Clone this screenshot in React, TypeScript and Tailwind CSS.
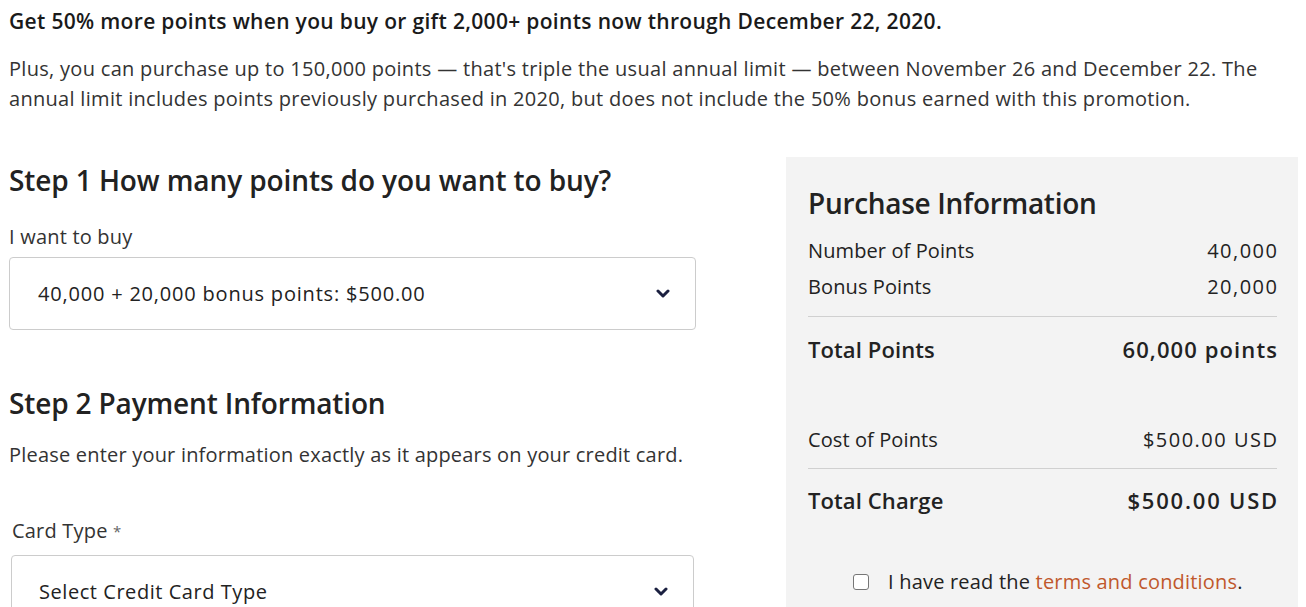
const font = { fontFamily: '"Open Sans", "Liberation Sans", sans-serif' };

const Chevron = () => (
  <svg width="14" height="9" viewBox="0 0 14 9" className="text-[#1b2040]">
    <path d="M2 2l5 5 5-5" fill="none" stroke="currentColor" strokeWidth="3" strokeLinecap="round" strokeLinejoin="round" />
  </svg>
);

const SelectBox = ({ value, className, track }: { value: string; className: string; track: string }) => (
  <div
    className={`flex items-center justify-between rounded border border-[#cccccc] bg-white pr-[25px] ${className}`}
  >
    <span className={`text-[20px] text-[#222] ${track}`}>{value}</span>
    <Chevron />
  </div>
);

const Row = ({
  label,
  value,
  bold,
  track = "tracking-[1.5px] -mr-[1.5px]",
}: {
  label: string;
  value: string;
  bold?: boolean;
  track?: string;
}) => (
  <div
    className={`flex items-center justify-between ${bold ? "font-semibold text-[22px]" : "text-[20px]"} text-[#222]`}
  >
    <span className="tracking-[0.1px]">{label}</span>
    <span className={track}>{value}</span>
  </div>
);

export default function App() {
  return (
    <div className="w-[1306px] h-[607px] overflow-hidden bg-white text-[#222]" style={font}>
      <div className="pl-[9px] pr-[8px]">
        <h1 className="pt-[8px] text-[21px] font-semibold leading-[26px] tracking-[0.32px] text-[#1a1a1a]">
          Get 50% more points when you buy or gift 2,000+ points now through December 22, 2020.
        </h1>
        <p className="mt-[20px] text-[20px] leading-[30px] text-[#333] tracking-[0.3px]">
          Plus, you can purchase up to 150,000 points — that's triple the usual annual limit — between November 26 and December 22. The
          annual limit includes points previously purchased in 2020, but does not include the 50% bonus earned with this promotion.
        </p>

        <div className="mt-[40px] flex items-start justify-between">
          <div className="w-[687px]">
            <h2 className="mt-[10px] text-[28px] font-semibold leading-[32px] tracking-[-0.1px]">
              Step 1 How many points do you want to buy?
            </h2>
            <div className="mt-[29px] text-[20px] leading-[24px] tracking-[0.2px] text-[#333]">I want to buy</div>
            <SelectBox
              value="40,000 + 20,000 bonus points: $500.00"
              track="tracking-[0.8px]"
              className="mt-[8px] h-[73px] pl-[28px]"
            />

            <h2 className="mt-[57px] text-[28px] font-semibold leading-[32px] tracking-[-0.15px]">Step 2 Payment Information</h2>
            <div className="mt-[24px] text-[20px] leading-[24px] tracking-[0.2px] text-[#333]">
              Please enter your information exactly as it appears on your credit card.
            </div>
            <div className="mt-[52px] pl-[3px] text-[20px] leading-[24px] tracking-[0.2px] text-[#333]">
              Card Type <span className="text-[#666] text-[15px] align-top">*</span>
            </div>
            <SelectBox
              value="Select Credit Card Type"
              track="tracking-[0.55px]"
              className="mt-[12px] ml-[2px] w-[683px] h-[73px] pl-[27px]"
            />
          </div>

          <div className="mt-[3px] w-[512px] h-[460px] bg-[#f3f3f3] px-[22px] pr-[21px]">
            <h2 className="pt-[28px] text-[28px] font-semibold leading-[36px] tracking-[-0.3px]">Purchase Information</h2>
            <div className="mt-[18px] flex flex-col gap-[12px] leading-[24px]">
              <Row label="Number of Points" value="40,000" />
              <Row label="Bonus Points" value="20,000" />
            </div>
            <div className="mt-[17px] h-px bg-[#d0d0d0]" />
            <div className="mt-[19px] leading-[26px]">
              <Row label="Total Points" value="60,000 points" bold track="tracking-[1.1px] -mr-[1px]" />
            </div>
            <div className="mt-[66px] leading-[24px]">
              <Row label="Cost of Points" value="$500.00 USD" />
            </div>
            <div className="mt-[16px] h-px bg-[#d0d0d0]" />
            <div className="mt-[18px] leading-[26px]">
              <Row label="Total Charge" value="$500.00 USD" bold track="tracking-[1.8px] -mr-[2px]" />
            </div>
            <label className="mt-[57px] flex items-center gap-[19px] pl-[45px] text-[20px] leading-[24px] tracking-[0.2px] text-[#222]">
              <span className="h-[16px] w-[16px] rounded-[3px] border border-[#767676] bg-white" />
              <span>
                I have read the <span className="text-[#c0582c]">terms and conditions</span>.
              </span>
            </label>
          </div>
        </div>
      </div>
    </div>
  );
}
